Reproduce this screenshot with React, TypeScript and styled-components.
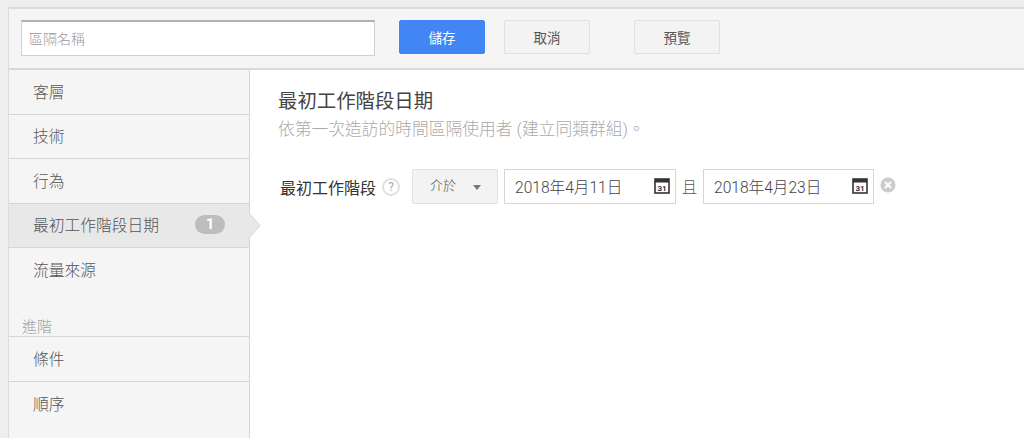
import React from 'react';
import styled, { createGlobalStyle } from 'styled-components';

const GlobalStyle = createGlobalStyle`
  html, body {
    margin: 0;
    padding: 0;
    background: #eeeeee;
    overflow: hidden;
  }
  * {
    box-sizing: border-box;
  }
  body {
    font-family: Roboto, "Noto Sans CJK TC", sans-serif;
  }
`;

const Page = styled.div`
  width: 1024px;
  height: 438px;
  padding: 7px 0 0 8px;
`;

const Panel = styled.div`
  height: 431px;
  display: flex;
  flex-direction: column;
  background: #fff;
  border-top: 2px solid #dcdcdc;
  border-left: 1px solid #dcdcdc;
`;

const Toolbar = styled.div`
  height: 61px;
  flex: none;
  display: flex;
  align-items: flex-start;
  padding: 11px 0 0 12px;
  background: #f5f5f5;
  border-bottom: 2px solid #d9d9d9;
`;

const NameInput = styled.input`
  width: 354px;
  height: 36px;
  padding: 0 7px;
  margin-right: 24px;
  background: #fff;
  border: 1px solid #d0d0d0;
  border-top: 2px solid #b0b0b0;
  border-radius: 0;
  outline: none;
  font: 300 14px Roboto, "Noto Sans CJK TC", sans-serif;

  &::placeholder {
    color: #999;
    opacity: 1;
  }
`;

const Button = styled.button<{ $primary?: boolean; $gap: number }>`
  width: 86px;
  height: 34px;
  margin-right: ${p => p.$gap}px;
  padding: 0;
  border-radius: 2px;
  border: 1px solid ${p => (p.$primary ? '#4285f4' : '#e0e0e0')};
  background: ${p => (p.$primary ? '#4285f4' : '#f3f3f3')};
  color: ${p => (p.$primary ? '#fff' : '#555')};
  font: 400 13.5px Roboto, "Noto Sans CJK TC", sans-serif;
`;

const Body = styled.div`
  flex: 1;
  display: flex;
  min-height: 0;
`;

const Sidebar = styled.nav`
  width: 241px;
  flex: none;
  background: #f5f5f5;
  border-right: 1px solid #d5d5d5;
`;

const NavItem = styled.div<{ $active?: boolean }>`
  position: relative;
  height: 44.5px;
  display: flex;
  align-items: center;
  justify-content: space-between;
  padding: 0 24px 1px 24px;
  font-size: 15.75px;
  font-weight: 300;
  color: #555;
  background: ${p => (p.$active ? '#e8e8e8' : 'transparent')};
  border-bottom: 1px solid #d5d5d5;
`;

const LastNavItem = styled(NavItem)`
  border-bottom: none;
`;

const Count = styled.span`
  width: 30px;
  height: 19px;
  border-radius: 10px;
  background: #bdbdbd;
  color: #fff;
  font-size: 15px;
  font-weight: 700;
  line-height: 19px;
  text-align: center;
`;

const Pointer = styled.svg`
  position: absolute;
  top: 9px;
  right: -12px;
  width: 12px;
  height: 25px;
`;

const SectionLabel = styled.div`
  height: 44.5px;
  padding: 24px 0 0 13px;
  font-size: 15px;
  line-height: 20px;
  font-weight: 300;
  color: #a0a0a0;
  border-bottom: 1px solid #d5d5d5;
`;

const Content = styled.main`
  flex: 1;
  padding: 20px 0 0 28px;
`;

const Title = styled.h1`
  margin: 0;
  font-size: 19.4px;
  line-height: 24px;
  font-weight: 400;
  color: #444;
`;

const Subtitle = styled.p`
  margin: 3px 0 28px;
  font-size: 16.75px;
  line-height: 24px;
  font-weight: 300;
  color: #aaa;
`;

const FilterRow = styled.div`
  display: flex;
  align-items: center;
  height: 35px;
`;

const FilterLabel = styled.span`
  margin-left: 2px;
  font-size: 16px;
  font-weight: 400;
  color: #333;
`;

const Help = styled.span`
  width: 18px;
  height: 18px;
  margin: 0 12px 0 6px;
  border: 2px solid #e0e0e0;
  border-radius: 50%;
  color: #aaa;
  font-size: 12px;
  line-height: 14px;
  text-align: center;
`;

const OperatorSelect = styled.div`
  width: 86px;
  height: 35px;
  display: flex;
  align-items: center;
  padding: 0 16px 4px 17px;
  justify-content: space-between;
  margin-right: 6px;
  background: #f3f3f3;
  border: 1px solid #e2e2e2;
  border-radius: 2px;
  font-size: 13px;
  font-weight: 300;
  color: #555;
`;

const Caret = styled.span`
  width: 0;
  height: 0;
  margin-top: 5px;
  border-left: 4.5px solid transparent;
  border-right: 4.5px solid transparent;
  border-top: 5px solid #777;
`;

const DateField = styled.div<{ $width: number }>`
  width: ${p => p.$width}px;
  height: 35px;
  display: flex;
  align-items: center;
  justify-content: space-between;
  padding: 0 5px 2px 10px;
  background: #fff;
  border: 1px solid #d6d6d6;
  font-size: 15.6px;
  font-weight: 300;
  color: #444;
`;

const Joiner = styled.span`
  width: 27px;
  padding-bottom: 2px;
  text-align: center;
  font-size: 15.5px;
  font-weight: 300;
  color: #555;
`;

const Clear = styled.svg`
  width: 16px;
  height: 16px;
  margin: 0 0 4px 6px;
`;

const CalendarIcon = () => (
  <svg width="16" height="16" viewBox="0 0 16 16">
    <rect x="1" y="1" width="14" height="14" fill="#fff" stroke="#333" strokeWidth="1.6" />
    <rect x="1" y="1" width="14" height="3.5" fill="#333" />
    <text x="8" y="12.6" fontSize="8" fontWeight="700" textAnchor="middle" fill="#333" fontFamily="Roboto, sans-serif">31</text>
  </svg>
);

const navTop = ['客層', '技術', '行為'];

export default function App() {
  return (
    <Page>
      <GlobalStyle />
      <Panel>
        <Toolbar>
          <NameInput placeholder="區隔名稱" />
          <Button $primary $gap={19}>儲存</Button>
          <Button $gap={44}>取消</Button>
          <Button $gap={0}>預覽</Button>
        </Toolbar>
        <Body>
          <Sidebar>
            {navTop.map(label => (
              <NavItem key={label}>{label}</NavItem>
            ))}
            <NavItem $active>
              最初工作階段日期
              <Count>1</Count>
              <Pointer viewBox="0 0 12 25">
                <path d="M0 0 L11 12.5 L0 25 Z" fill="#e8e8e8" />
                <path d="M0 0 L11 12.5 L0 25" fill="none" stroke="#d5d5d5" />
              </Pointer>
            </NavItem>
            <LastNavItem>流量來源</LastNavItem>
            <SectionLabel>進階</SectionLabel>
            <NavItem>條件</NavItem>
            <LastNavItem>順序</LastNavItem>
          </Sidebar>
          <Content>
            <Title>最初工作階段日期</Title>
            <Subtitle>依第一次造訪的時間區隔使用者 (建立同類群組)。</Subtitle>
            <FilterRow>
              <FilterLabel>最初工作階段</FilterLabel>
              <Help>?</Help>
              <OperatorSelect>
                介於
                <Caret />
              </OperatorSelect>
              <DateField $width={172}>
                2018年4月11日
                <CalendarIcon />
              </DateField>
              <Joiner>且</Joiner>
              <DateField $width={171}>
                2018年4月23日
                <CalendarIcon />
              </DateField>
              <Clear viewBox="0 0 16 16">
                <circle cx="8" cy="8" r="7.5" fill="#ccc" />
                <path d="M5 5 L11 11 M11 5 L5 11" stroke="#fff" strokeWidth="2" />
              </Clear>
            </FilterRow>
          </Content>
        </Body>
      </Panel>
    </Page>
  );
}
